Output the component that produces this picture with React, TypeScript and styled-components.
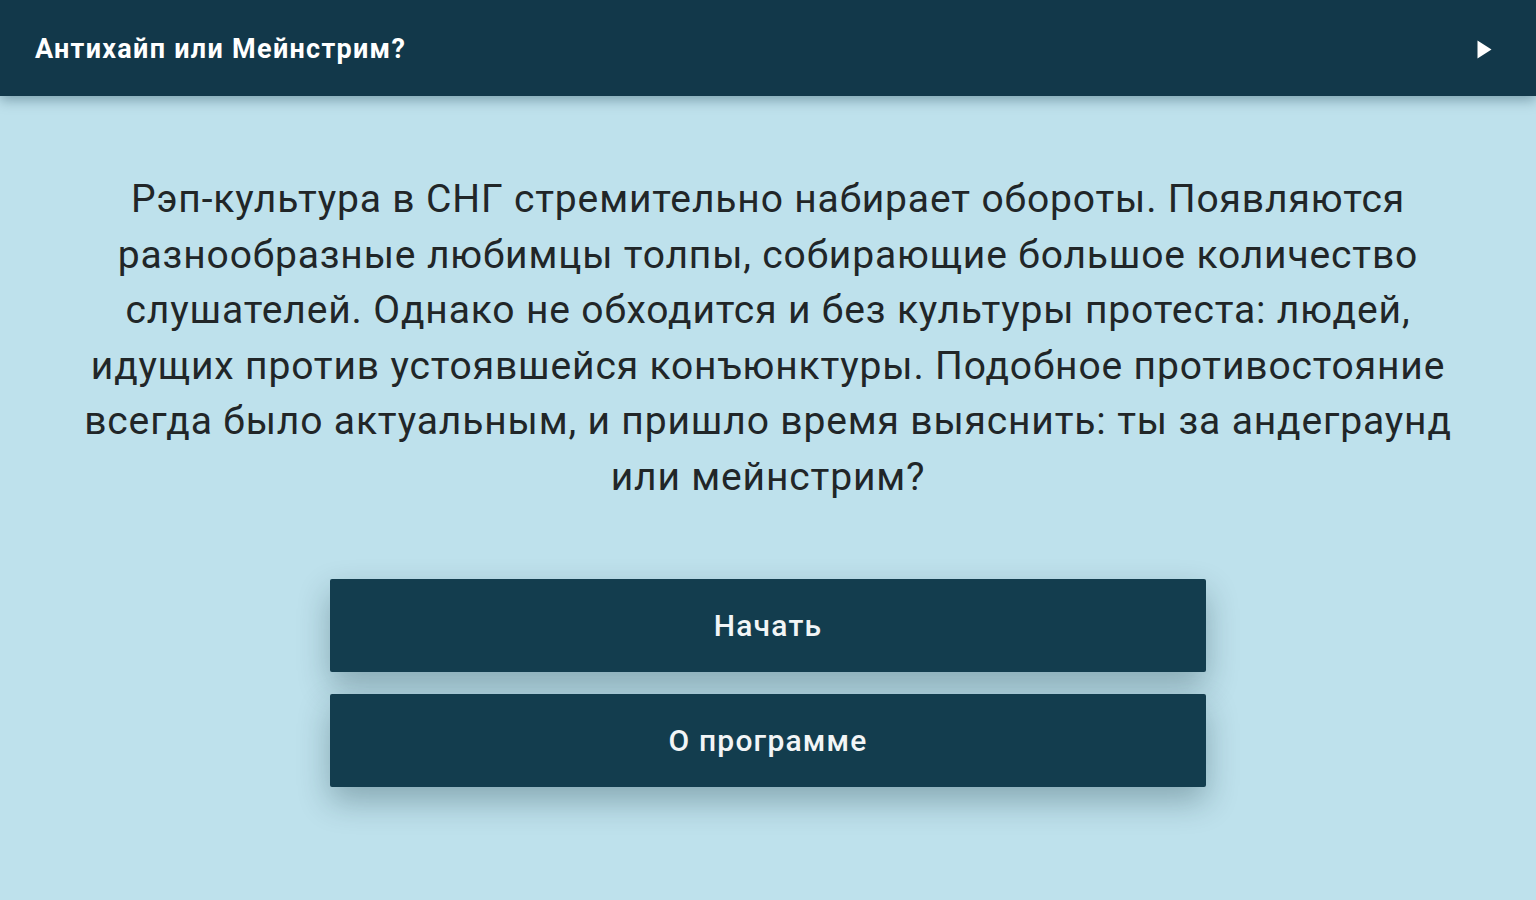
import styled, { createGlobalStyle } from "styled-components";

const GlobalStyle = createGlobalStyle`
  html, body {
    margin: 0;
    padding: 0;
    background: #bee1ec;
    font-family: Roboto, "Noto Sans", sans-serif;
  }
`;

const Page = styled.div`
  width: 100%;
  height: 900px;
  background: #bee1ec;
  display: flex;
  flex-direction: column;
  overflow: hidden;
`;

const Toolbar = styled.header`
  height: 96px;
  background: #12384a;
  display: flex;
  align-items: center;
  justify-content: space-between;
  padding: 2px 44px 0 35px;
  box-sizing: border-box;
  box-shadow: 0 4px 12px rgba(0, 40, 60, 0.35);
  position: relative;
  z-index: 1;
`;

const Title = styled.h1`
  margin: 0;
  color: #ffffff;
  font-size: 27px;
  font-weight: 700;
  letter-spacing: 1.3px;
`;

const PlayButton = styled.button`
  border: none;
  background: none;
  padding: 0;
  display: flex;
  align-items: center;
  cursor: pointer;
`;

const Content = styled.main`
  display: flex;
  flex-direction: column;
  align-items: center;
  padding-top: 76px;
`;

const Intro = styled.p`
  margin: 0;
  width: 1450px;
  text-align: center;
  color: #212628;
  font-size: 39px;
  line-height: 55.5px;
  letter-spacing: 0.85px;
`;

const Actions = styled.div`
  display: flex;
  flex-direction: column;
  gap: 22px;
  margin-top: 74px;
  width: 876px;
`;

const ActionButton = styled.button`
  height: 93px;
  border: none;
  border-radius: 2px;
  background: #133d4e;
  color: #f2f5f6;
  font-family: Roboto, "Noto Sans", sans-serif;
  font-size: 30px;
  font-weight: 500;
  letter-spacing: 1.2px;
  box-shadow: 0 14px 32px rgba(20, 50, 60, 0.32);
  cursor: pointer;
`;

const lines = [
  "Рэп-культура в СНГ стремительно набирает обороты. Появляются",
  "разнообразные любимцы толпы, собирающие большое количество",
  "слушателей. Однако не обходится и без культуры протеста: людей,",
  "идущих против устоявшейся конъюнктуры. Подобное противостояние",
  "всегда было актуальным, и пришло время выяснить: ты за андеграунд",
  "или мейнстрим?",
];

export default function App() {
  return (
    <>
      <GlobalStyle />
      <Page>
        <Toolbar>
          <Title>Антихайп или Мейнстрим?</Title>
          <PlayButton aria-label="play">
            <svg width="15" height="19" viewBox="0 0 15 19">
              <path d="M0.5 0.5 L14.5 9.5 L0.5 18.5 Z" fill="#ffffff" />
            </svg>
          </PlayButton>
        </Toolbar>
        <Content>
          <Intro>
            {lines.map((line, i) => (
              <span key={i}>
                {line}
                {i < lines.length - 1 && <br />}
              </span>
            ))}
          </Intro>
          <Actions>
            <ActionButton>Начать</ActionButton>
            <ActionButton>О программе</ActionButton>
          </Actions>
        </Content>
      </Page>
    </>
  );
}
